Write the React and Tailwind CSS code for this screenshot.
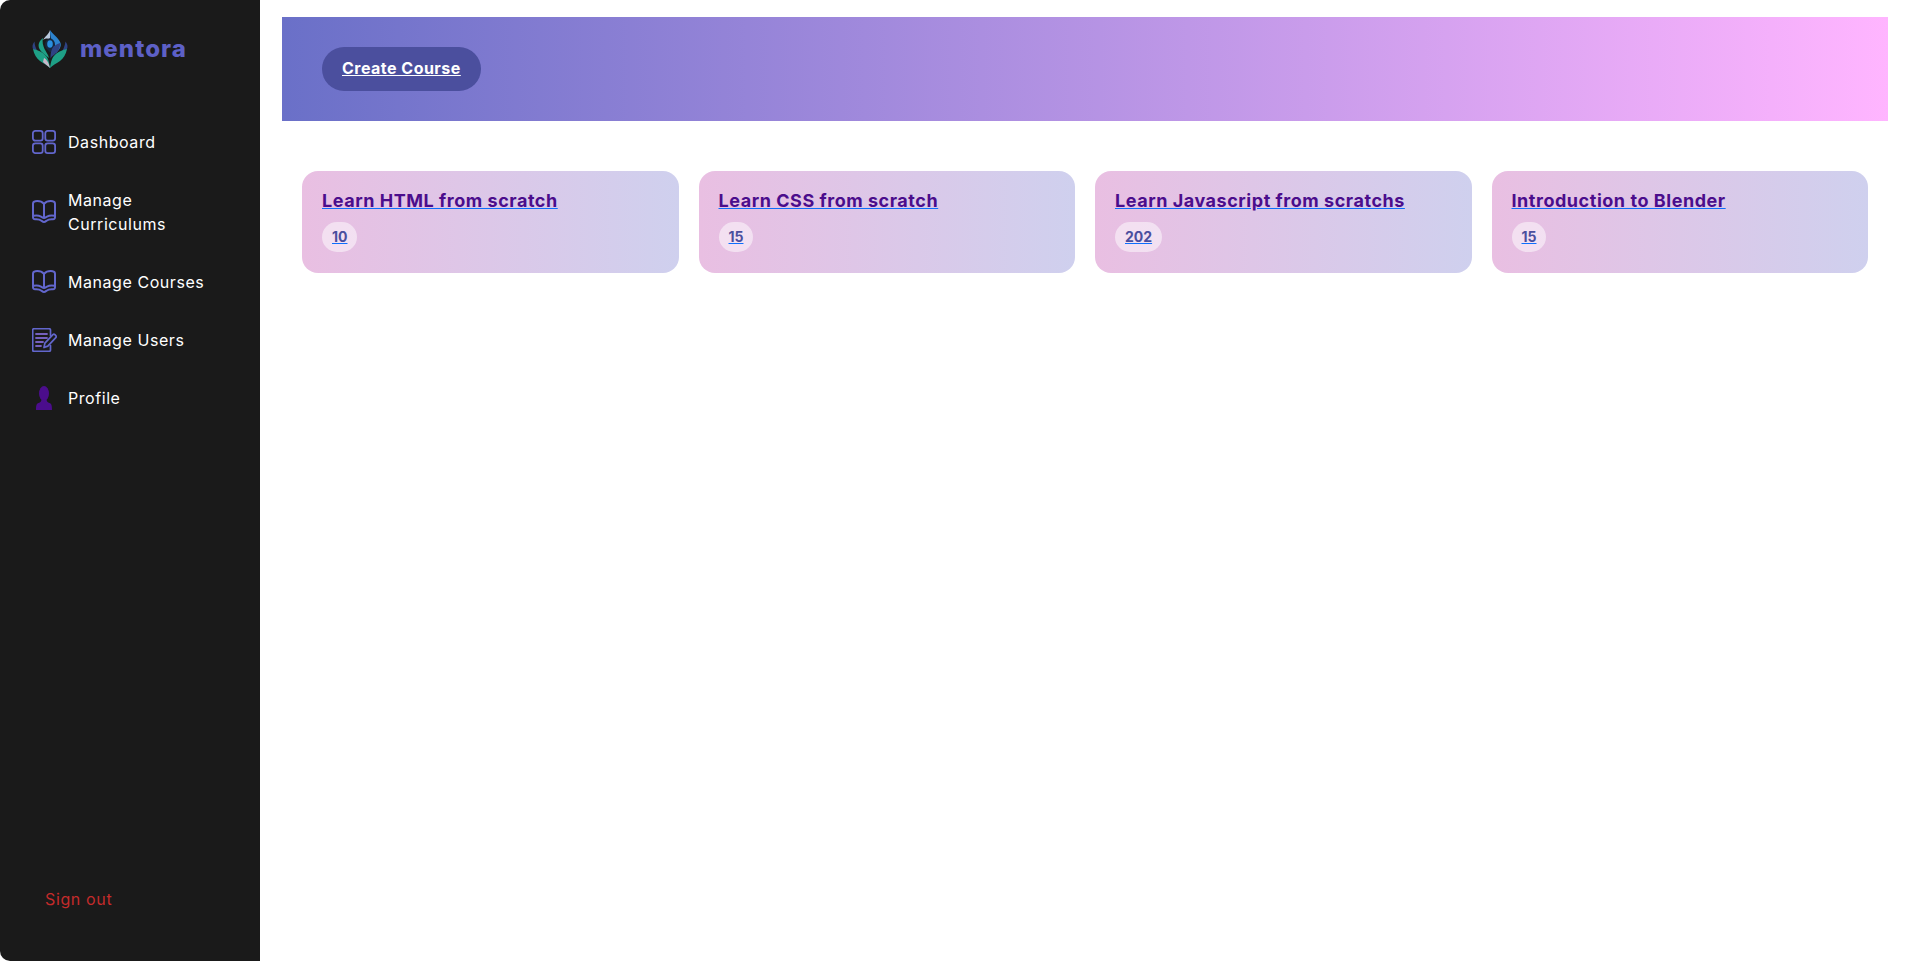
import React from "react";

const iconColor = "#6266cc";

function GridIcon() {
  return (
    <svg width="24" height="24" viewBox="0 0 24 24" fill="none" stroke={iconColor} strokeWidth="1.8">
      <rect x="0.9" y="0.9" width="9.8" height="9.800" rx="2.400" />
      <rect x="13.300" y="0.9" width="9.800" height="9.800" rx="2.400" />
      <rect x="0.9" y="13.300" width="9.800" height="9.800" rx="2.400" />
      <rect x="13.300" y="13.300" width="9.800" height="9.800" rx="2.400" />
    </svg>
  );
}

function BookIcon() {
  return (
    <svg width="24" height="24" viewBox="0 0 24 24" fill="none" stroke={iconColor} strokeWidth="2" strokeLinejoin="round" strokeLinecap="round">
      <path d="M12 3.800C10 1.600 6.500.8 3.400 1.200 1.900 1.400 1 2.300 1 3.800v13.400c0 1.300.9 2.100 2.200 2 2.500-.2 4.700.2 6.300 1.500.9.700 1.600 1.300 2.500 1.300s1.600-.6 2.500-1.300c1.600-1.300 3.800-1.700 6.300-1.500 1.300.1 2.200-.7 2.200-2V3.800c0-1.500-.9-2.400-2.400-2.600C17.500.8 14 1.600 12 3.800Z" />
      <path d="M12 3.800V17.500" />
      <path d="M1.400 15.800c3-.6 5.600-.3 7.600.8 1.200.7 2 1.400 3 1.400s1.800-.7 3-1.400c2-1.100 4.600-1.400 7.600-.8" />
    </svg>
  );
}

function NoteIcon() {
  return (
    <svg width="25" height="24" viewBox="0 0 25 24" fill="none" stroke={iconColor} strokeWidth="1.7" strokeLinecap="round" strokeLinejoin="round">
      <path d="M18.500 7.500V2c0-.8-.5-1.300-1.300-1.300H2C1.200.7.700 1.200.700 2v20c0 .8.5 1.300 1.300 1.300h15.200c.8 0 1.300-.5 1.300-1.300v-4.500" />
      <path d="M4 6h11M4 10h11M4 14h7M4 18h5" strokeWidth="1.800" stroke="#7560bf" />
      <path d="M12 19.500l.9-4.300 8-8.500c.6-.6 1.400-.6 2 0l.9.9c.6.6.6 1.400 0 2l-8 8.500-3.800 1.400Z" fill="#1a1a1a" />
    </svg>
  );
}

function PersonIcon() {
  return (
    <svg width="24" height="24" viewBox="0 0 24 24" fill="#4b0d8c">
      <ellipse cx="12" cy="7.500" rx="5" ry="7.500" />
      <path d="M9.500 13.500h5c.2 2 1 2.900 3 3.500 2 .6 2.500 2.500 2.500 7H4c0-4.500.5-6.400 2.500-7 2-.6 2.800-1.500 3-3.500Z" />
    </svg>
  );
}

function Logo() {
  return (
    <svg width="36" height="38" viewBox="0 0 36 38">
      <path d="M18 0c2.500 4 8.500 7.500 10.500 13 1 3-1 7-4.500 10 .5-5-1-8-3.500-11C19 10 18 6 18 0Z" fill="#2c83cf" />
      <path d="M18 0c-1 4-5 6.500-7 10 3-2 5-1.800 7-.5Z" fill="#b9c9de" />
      <path d="M18 8c3 1 5 3.500 5 6.500 0 3-2.500 5.500-5 8-2.500-2.500-5-5-5-8 0-3 2-5.500 5-6.500Z" fill="#16283f" />
      <path d="M11 8c-4 3-5.500 7-3.500 11 1.500 3 5 5.500 9.500 9-1-4-3-6-4.500-9-1.500-3.500-2.500-7-1.500-11Z" fill="#1ea086" />
      <ellipse cx="18" cy="14" rx="2.800" ry="3.800" fill="#2a8fe0" />
      <path d="M28 13c.5 5-2 9-6 12-1.500 1-2.800 2-3.500 3.500 0-5 .5-9 3-12 2-1.500 4-2.500 6.500-3.500Z" fill="#2e4384" />
      <path d="M2.500 11.500C.5 14 0 16.500 1 19c2 1 3.500 1.800 5 3-2-3.500-3.500-6.500-3.500-10.500Z" fill="#2e4384" />
      <path d="M33.500 11.500c2 2.500 2.500 5 1.500 7.500-2 2-4.500 4-7 5.500 3-4 5-8.500 5.500-13Z" fill="#2e4384" />
      <path d="M1 19c5 1 10 3 13.500 7.500 1.500 2 2.500 4.500 3.500 11.500-3-3-6.500-4.500-10-7-3.500-2.500-6-7-7-12Z" fill="#1ea086" />
      <path d="M35 19c-5 1-10 3-13.500 7.500-1.500 2-2.500 4.500-3.500 11.500 3-3 6.500-4.500 10-7 3.500-2.500 6-7 7-12Z" fill="#1ea086" />
      <path d="M12 28c2.500 1.500 4.500 4 6 10-2-2-5-4-7-6Z" fill="#c9b7c9" />
    </svg>
  );
}

const navItems = [
  { label: "Dashboard", icon: <GridIcon /> },
  { label: "Manage Curriculums", icon: <BookIcon /> },
  { label: "Manage Courses", icon: <BookIcon /> },
  { label: "Manage Users", icon: <NoteIcon /> },
  { label: "Profile", icon: <PersonIcon /> },
];

const courses = [
  { title: "Learn HTML from scratch", count: 10 },
  { title: "Learn CSS from scratch", count: 15 },
  { title: "Learn Javascript from scratchs", count: 202 },
  { title: "Introduction to Blender", count: 15 },
];

export default function App() {
  return (
    <div className="flex h-screen bg-white font-['Inter',sans-serif]">
      <aside className="flex w-[260px] shrink-0 flex-col rounded-l-[10px] bg-[#1a1a1a] pb-[50px] pl-8 pt-[30px]">
        <div className="flex h-[38px] items-center gap-[12px]">
          <Logo />
          <span className="text-2xl font-extrabold text-[#5d60c6] tracking-[0.045em]">mentora</span>
        </div>
        <nav className="mt-[62px] flex flex-col gap-[34px]">
          {navItems.map((item) => (
            <a key={item.label} href="#" className="flex items-center gap-3 pr-10 text-base text-white">
              <span className="w-6 shrink-0">{item.icon}</span>
              <span className="tracking-[0.035em]">{item.label}</span>
            </a>
          ))}
        </nav>
        <a href="#" className="mt-auto pl-[13px] text-base text-[#c42b2b] tracking-[0.04em]">
          Sign out
        </a>
      </aside>

      <main className="flex-1 pl-[22px] pr-5 pt-[17px]">
        <div className="flex h-[104px] items-center bg-[linear-gradient(90deg,#6a70c8,#ffb5ff)] pl-10">
          <a href="#" className="rounded-[22px] bg-[#4b4f9e] px-5 pb-[11px] pt-[9px] text-base font-bold text-white underline tracking-[0.03em]">
            Create Course
          </a>
        </div>
        <div className="mt-[30px] grid grid-cols-4 gap-5 p-5">
          {courses.map((course) => (
            <a key={course.title} href="#" className="h-[102px] rounded-[16px] bg-[linear-gradient(90deg,#e9bfe2,#cfd0ee)] px-5 pt-[14px] underline decoration-[#0d6efd]">
              <h3 className="text-lg font-bold leading-[32px] text-[#4b0d8c] tracking-[0.03em]">{course.title}</h3>
              <span className="mt-[5px] inline-block rounded-full bg-white/50 px-[10px] py-[5px] text-sm font-bold text-[#4b4f9e] underline decoration-[#0d6efd]">
                {course.count}
              </span>
            </a>
          ))}
        </div>
      </main>
    </div>
  );
}
